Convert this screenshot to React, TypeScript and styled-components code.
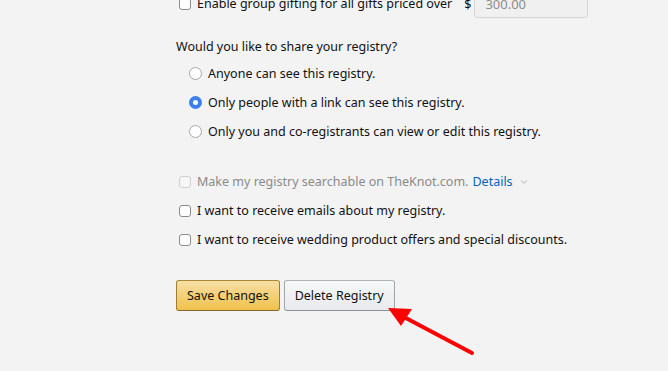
import styled, { createGlobalStyle } from "styled-components";
import { ChevronDown } from "lucide-react";

const GlobalStyle = createGlobalStyle`
	html, body {
		margin: 0;
		background: #f3f3f3;
		font-family: "Noto Sans", "Liberation Sans", Arial, sans-serif;
		color: #111;
		overflow: hidden;
	}
`;

const shareOptions = [
	{ label: "Anyone can see this registry.", checked: false },
	{ label: "Only people with a link can see this registry.", checked: true },
	{ label: "Only you and co-registrants can view or edit this registry.", checked: false },
];

const App = () => {
	return (
		<Page>
			<GlobalStyle />
			<Form>
				<GiftRow>
					<Checkbox type="checkbox" readOnly />
					<Label>Enable group gifting for all gifts priced over</Label>
					<Currency>$</Currency>
					<AmountInput value="300.00" disabled readOnly />
				</GiftRow>

				<Question>Would you like to share your registry?</Question>
				<RadioList>
					{shareOptions.map((option) => (
						<OptionRow key={option.label}>
							<Radio type="radio" name="share" checked={option.checked} readOnly />
							<Label>{option.label}</Label>
						</OptionRow>
					))}
				</RadioList>

				<CheckList>
					<OptionRow>
						<Checkbox type="checkbox" disabled />
						<Label $muted>Make my registry searchable on TheKnot.com.</Label>
						<DetailsLink href="#">Details</DetailsLink>
						<Chevron size={10} strokeWidth={1.5} />
					</OptionRow>
					<OptionRow>
						<Checkbox type="checkbox" readOnly />
						<Label>I want to receive emails about my registry.</Label>
					</OptionRow>
					<OptionRow>
						<Checkbox type="checkbox" readOnly />
						<Label>I want to receive wedding product offers and special discounts.</Label>
					</OptionRow>
				</CheckList>

				<Actions>
					<Button $primary>Save Changes</Button>
					<Button>Delete Registry</Button>
				</Actions>
			</Form>

			<Arrow width="668" height="371" viewBox="0 0 668 371">
				<line x1="472" y1="353" x2="402" y2="316" stroke="#f00" strokeWidth="4" strokeLinecap="round" />
				<polygon points="388,308 412,309 401,326" fill="#f00" />
			</Arrow>
		</Page>
	);
};

const Page = styled.div`
	position: relative;
	width: 668px;
	height: 371px;
	overflow: hidden;
`;

const Form = styled.div`
	display: flex;
	flex-direction: column;
	padding-left: 176px;
	margin-top: -10px;
`;

const GiftRow = styled.div`
	display: flex;
	align-items: center;
	height: 28px;

	& > span:first-of-type {
		position: relative;
		top: -1px;
	}
`;

const Label = styled.span<{ $muted?: boolean }>`
	font-size: 12.5px;
	color: ${(p) => (p.$muted ? "#8a8a8a" : "#111")};
	white-space: nowrap;
`;

const Currency = styled.span`
	font-size: 12.5px;
	margin-left: 12px;
	margin-right: 3px;
`;

const AmountInput = styled.input`
	box-sizing: border-box;
	width: 114px;
	height: 28px;
	border: 1px solid #d5d5d5;
	border-radius: 3px;
	background: #f0f0f0;
	padding: 0 10px;
	font: inherit;
	font-size: 13px;
	color: #8d8d8d;
`;

const Question = styled.div`
	font-size: 12.5px;
	line-height: 19px;
	margin-top: 19px;
	margin-bottom: 3px;
`;

const RadioList = styled.div`
	display: flex;
	flex-direction: column;
	padding-left: 13px;
`;

const OptionRow = styled.label`
	display: flex;
	align-items: center;
	height: 29px;
`;

const Radio = styled.input`
	appearance: none;
	box-sizing: border-box;
	width: 13px;
	height: 13px;
	margin: 0 6px 0 0;
	border-radius: 50%;
	border: 1px solid #a6a6a6;
	background: #fff;
	&:checked {
		border: 4.5px solid #3b7ff0;
		background: #fff;
	}
`;

const Checkbox = styled.input`
	appearance: none;
	box-sizing: border-box;
	width: 12px;
	height: 12px;
	margin: 0 6px 0 3px;
	border-radius: 3px;
	border: 1px solid #8c8c8c;
	background: #fff;
	&:disabled {
		border-color: #cfcfcf;
		background: #f6f6f6;
	}
`;

const CheckList = styled.div`
	display: flex;
	flex-direction: column;
	margin-top: 21px;
`;

const DetailsLink = styled.a`
	font-size: 12.5px;
	color: #0066c0;
	text-decoration: none;
	margin-left: 4px;
`;

const Chevron = styled(ChevronDown)`
	color: #888;
	margin-left: 6px;
`;

const Actions = styled.div`
	display: flex;
	gap: 4px;
	margin-top: 26px;
`;

const Button = styled.button<{ $primary?: boolean }>`
	box-sizing: border-box;
	height: 31px;
	padding: 0 10px;
	border: 1px solid;
	border-radius: 3px;
	font-family: inherit;
	font-size: 12.5px;
	color: #111;
	background: ${(p) =>
		p.$primary
			? "linear-gradient(to bottom, #f7dfa5, #f0c14b)"
			: "linear-gradient(to bottom, #f7f8fa, #e7e9ec)"};
	border-color: ${(p) =>
		p.$primary ? "#a88734 #9c7e31 #846a29" : "#adb1b8 #a2a6ac #8d9096"};
`;

const Arrow = styled.svg`
	position: absolute;
	left: 0;
	top: 0;
	pointer-events: none;
`;

export default App;
